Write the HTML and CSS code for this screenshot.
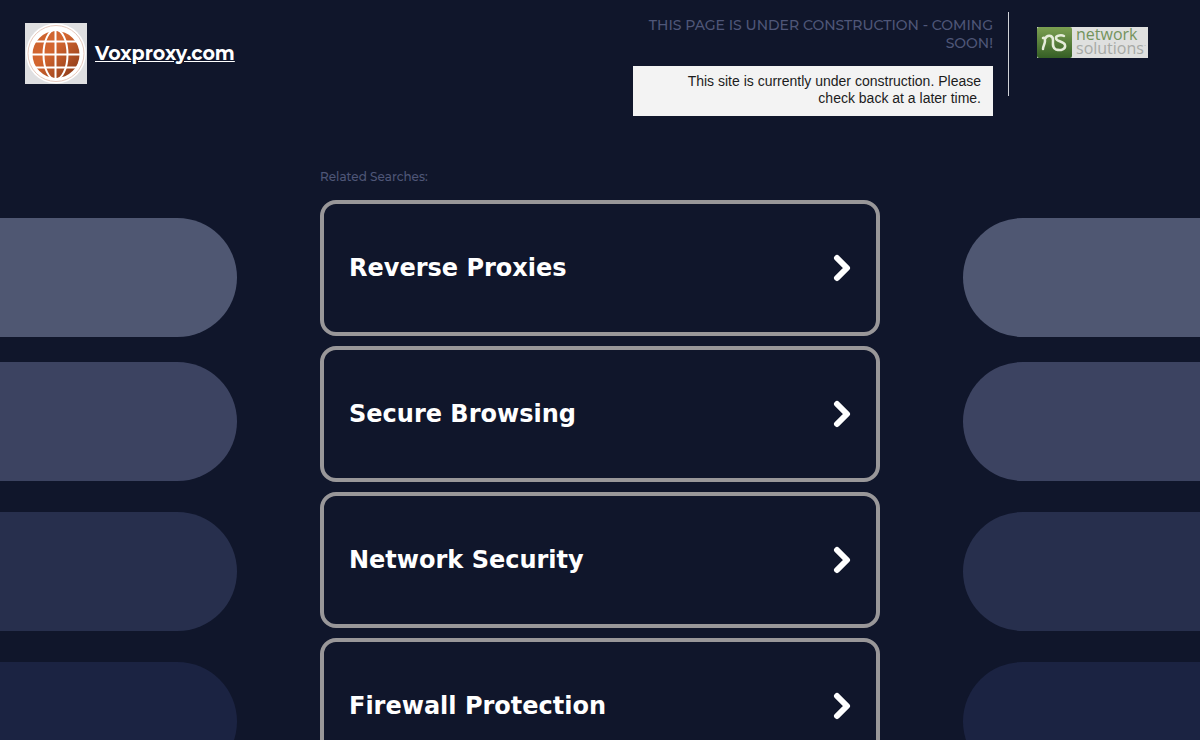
FILE: index.html
```
<!DOCTYPE html>
<html lang="en">
<head>
    <meta charset="UTF-8">
    <meta name="viewport" content="width=device-width, initial-scale=1">
    <title>Voxproxy.com</title>
    <link rel="stylesheet" href="styles.css">
</head>
<body>
    <header class="header">
        <a class="brand" href="#">
            <svg class="globe" viewBox="0 0 62 61" aria-hidden="true">
                <defs>
                    <linearGradient id="copper" x1="0" y1="0" x2="1" y2="1">
                        <stop offset="0" stop-color="#c9622f"/>
                        <stop offset="0.4" stop-color="#d4662f"/>
                        <stop offset="1" stop-color="#843617"/>
                    </linearGradient>
                </defs>
                <rect width="62" height="61" fill="#dfdfe1"/>
                <circle cx="31" cy="30.500" r="30" fill="#fff"/>
                <circle cx="31" cy="30.500" r="28" fill="none" stroke="#e6c8bb" stroke-width="1"/>
                <circle cx="31" cy="31.500" r="23.500" fill="url(#copper)"/>
                <g fill="none" stroke="#fff" stroke-width="2">
                    <path d="M30.500 7V56M7 31.500H55M10 18.500H52M10 44.500H52"/>
                    <ellipse cx="30.500" cy="31.500" rx="12" ry="25"/>
                </g>
            </svg>
            <span class="name">Voxproxy.com</span>
        </a>
        <div class="notice">
            <div class="status">
                <h1>THIS PAGE IS UNDER CONSTRUCTION - COMING SOON!</h1>
                <p>This site is currently under construction. Please check back at a later time.</p>
            </div>
            <a class="sponsor" href="#">
                <svg class="mark" viewBox="0 0 35 31" aria-hidden="true">
                    <defs>
                        <linearGradient id="leaf" x1="0" y1="0" x2="0" y2="1">
                            <stop offset="0" stop-color="#7ca052"/>
                            <stop offset="1" stop-color="#355f25"/>
                        </linearGradient>
                    </defs>
                    <rect width="35" height="31" rx="2" fill="url(#leaf)"/>
                    <g fill="none" stroke="#e5ecd9" stroke-width="2.500" stroke-linecap="round">
                        <path d="M6 22C6 19 8 17 8 14C8 11 7 10 6 11M8 12C10 7 16 8 16 13C16 17 15 21 19 22.500C24 24 29 22 28 18C27 14 19 15 19 11C19 8 25 8 27 9"/>
                    </g>
                </svg>
                <span class="wordmark"><span class="green">network</span><span class="grey">solutions<sup>·</sup></span></span>
            </a>
        </div>
    </header>
    <main class="main">
        <div class="bars left">
            <div class="bar one"></div>
            <div class="bar two"></div>
            <div class="bar three"></div>
            <div class="bar four"></div>
        </div>
        <section class="searches">
            <h2>Related Searches:</h2>
            <nav class="links">
                <a class="card" href="#">Reverse Proxies
                    <svg class="arrow" viewBox="0 0 18 28" aria-hidden="true"><path d="M4 4L14 14L4 24"/></svg>
                </a>
                <a class="card" href="#">Secure Browsing
                    <svg class="arrow" viewBox="0 0 18 28" aria-hidden="true"><path d="M4 4L14 14L4 24"/></svg>
                </a>
                <a class="card" href="#">Network Security
                    <svg class="arrow" viewBox="0 0 18 28" aria-hidden="true"><path d="M4 4L14 14L4 24"/></svg>
                </a>
                <a class="card" href="#">Firewall Protection
                    <svg class="arrow" viewBox="0 0 18 28" aria-hidden="true"><path d="M4 4L14 14L4 24"/></svg>
                </a>
            </nav>
        </section>
        <div class="bars right">
            <div class="bar one"></div>
            <div class="bar two"></div>
            <div class="bar three"></div>
            <div class="bar four"></div>
        </div>
    </main>
</body>
</html>
```
FILE: styles.css
```
* {
    box-sizing: border-box;
}
body {
    margin: 0;
    background-color: #10162b;
    color: #fff;
    font-family: Montserrat, Inter, "Liberation Sans", sans-serif;
}
h1, h2, p {
    margin: 0;
}
.header {
    display: flex;
    justify-content: space-between;
    align-items: flex-start;
    padding: 12px 52px 0 25px;
}
.brand {
    display: flex;
    align-items: center;
    gap: 8px;
    margin-top: 11px;
    color: #fff;
}
.globe {
    width: 62px;
    height: 61px;
}
.name {
    font-size: 19px;
    font-weight: 700;
}
.notice {
    display: flex;
    align-items: flex-start;
}
.status {
    position: relative;
    width: 376px;
    padding: 4px 16px 0 0;
    text-align: right;
}
/* divider next to the sponsor logo */
.status::after {
    content: "";
    position: absolute;
    top: 0;
    right: 0;
    width: 1px;
    height: 84px;
    background-color: #d0d2d8;
}
.status h1 {
    margin-bottom: 14px;
    color: #4f5678;
    font-size: 14px;
    font-weight: 500;
    line-height: 18px;
}
.status p {
    padding: 7px 12px 9px 32px;
    background-color: #f3f3f3;
    color: #1c1c1c;
    font-family: Arial, "Liberation Sans", sans-serif;
    font-size: 14px;
    line-height: 17px;
}
.sponsor {
    display: flex;
    width: 111px;
    height: 31px;
    margin: 15px 0 0 28px;
    background-color: #dfe0df;
    text-decoration: none;
}
.mark {
    flex: none;
    width: 35px;
    height: 31px;
}
.wordmark {
    display: flex;
    flex-direction: column;
    padding-left: 4px;
    font-family: "Open Sans", sans-serif;
    font-size: 16px;
    line-height: 14px;
}
.green {
    color: #73935c;
}
.grey {
    color: #a7aaa6;
}
.grey sup {
    font-size: 8px;
    line-height: 0;
}
.main {
    display: grid;
    grid-template-columns: 1fr 560px 1fr;
    gap: 83px;
    margin-top: 52px;
}
.bars {
    padding-top: 50px;
}
.bar {
    height: 119px;
    margin-bottom: 31px;
}
.left .bar {
    border-radius: 0 60px 60px 0;
}
.right .bar {
    border-radius: 60px 0 0 60px;
}
.bar.one {
    margin-bottom: 25px;
    background-color: #4f5772;
}
.two {
    background-color: #3c4361;
}
.three {
    background-color: #272f4d;
}
.four {
    background-color: #1b2342;
}
.searches h2 {
    color: #4f5678;
    font-size: 12px;
    font-weight: 500;
    line-height: 18px;
}
.links {
    display: flex;
    flex-direction: column;
    gap: 10px;
    margin-top: 14px;
}
.card {
    display: flex;
    justify-content: space-between;
    align-items: center;
    height: 136px;
    padding: 0 25px;
    border: 4px solid #999799;
    border-radius: 16px;
    color: #fff;
    font-family: Verdana, "DejaVu Sans", sans-serif;
    font-size: 24px;
    font-weight: 700;
    text-decoration: none;
}
.arrow {
    width: 18px;
    height: 28px;
    fill: none;
    stroke: #fff;
    stroke-width: 6;
    stroke-linecap: round;
    stroke-linejoin: round;
}
```
